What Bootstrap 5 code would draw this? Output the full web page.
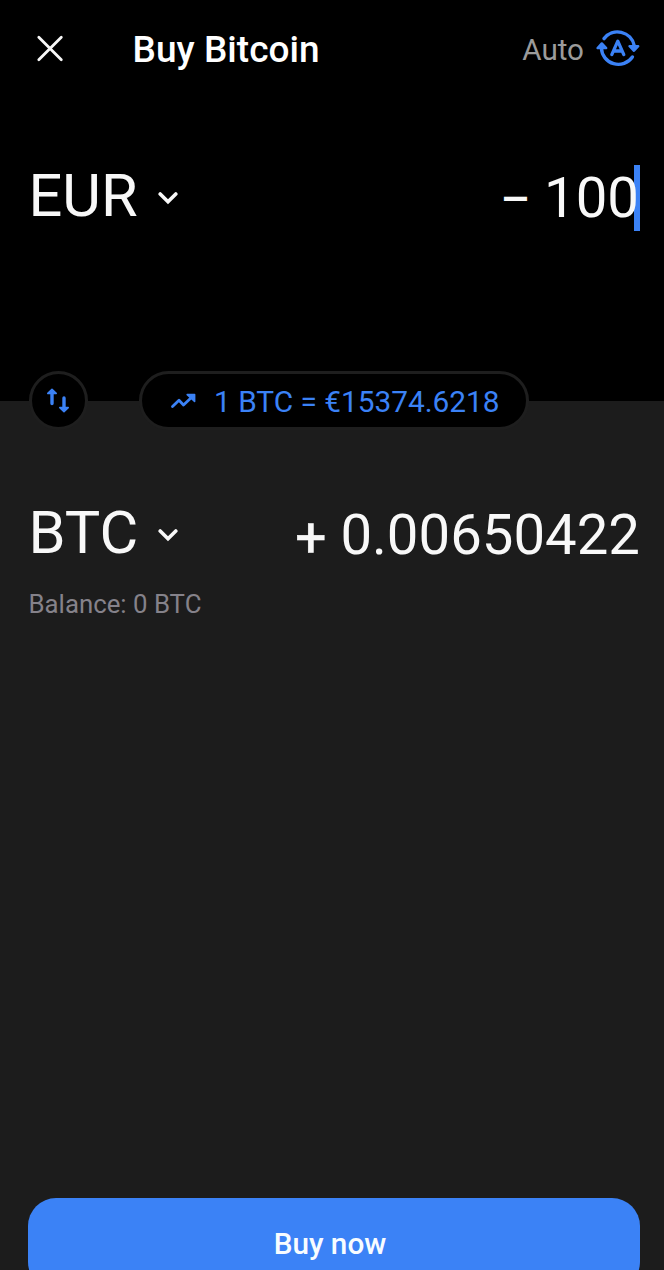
<!DOCTYPE html>
<html lang="en" data-bs-theme="dark">
<head>
<meta charset="utf-8">
<meta name="viewport" content="width=device-width, initial-scale=1">
<title>Buy Bitcoin</title>
<link href="https://cdn.jsdelivr.net/npm/bootstrap@5.3.0/dist/css/bootstrap.min.css" rel="stylesheet">
<style>
  :root { --blue: #3b82f6; --panel: #1c1c1c; }
  body { font-family: Roboto, "Liberation Sans", sans-serif; background: var(--panel); color: #f8f8f8; height: 1270px; }
  svg { display: block; flex: none; }
  .pay { background: #000; height: 401px; padding-top: .1px; }
  .topbar { height: 100px; padding: 0 24px 0 36px; }
  .topbar svg { margin-bottom: 3px; }
  .title { font-size: 37px; font-weight: 500; line-height: 50px; margin-left: 68.5px; letter-spacing: .05px; }
  .auto { font-size: 29.6px; line-height: 40px; color: #9b9b9b; margin-right: 12px; }
  .amount-row { height: 70px; padding: 0 24px 0 28.5px; }
  .pay .amount-row { margin-top: 63px; }
  .receive .amount-row { margin-top: 71px; }
  .code { font-size: 59.5px; line-height: 70px; margin-bottom: 5px; }
  .code + svg { margin-left: 20px; }
  .value { font-size: 56.3px; line-height: 70px; }
  .minus { font-size: 46px; font-weight: 500; line-height: 1; vertical-align: 2px; }
  .plus { font-size: 55px; line-height: 1; vertical-align: -3px; -webkit-text-stroke: .6px; }
  .caret { width: 6px; height: 66px; background: var(--blue); margin-left: -5px; }
  .value { z-index: 1; }
  .rate-row { height: 58px; margin-top: -30px; padding-left: 29px; gap: 51px; color: var(--blue); }
  .swap, .rate { background: #000; border: 3px solid #1e1e1e; height: 59px; }
  .swap { width: 59px; padding-right: 2px; }
  .rate { width: 390px; font-size: 29.8px; padding-left: 28px; gap: 17px; }
  .rate span { padding-top: 3px; }
  .balance { font-size: 25.8px; line-height: 36px; color: #85828a; padding-left: 28.5px; margin-top: 16px; }
  .buy { height: 92px; margin: 0 24px -20px 28px; border-radius: 28px; background: var(--blue); font-size: 29.7px; font-weight: 500; color: #f8fcff; padding: 0 8px 0 0; border: 0; }
</style>
</head>
<body class="overflow-hidden d-flex flex-column">
<section class="pay flex-shrink-0">
  <header class="topbar d-flex align-items-center">
    <svg width="28" height="28" viewBox="0 0 28 28" fill="none" stroke="#f8f8f8" stroke-width="2.8" stroke-linecap="round"><path d="M2.8 2.3 25.3 24.8M25.3 2.3 2.8 24.8"/></svg>
    <h1 class="title mb-0">Buy Bitcoin</h1>
    <span class="auto ms-auto">Auto</span>
    <svg width="44" height="40" viewBox="0 0 44 40" fill="none" stroke="#3b82f6" stroke-width="3.4" stroke-linecap="round" stroke-linejoin="round"><path d="M8 9.6A17 17 0 0 1 38.2 16.5M36.4 28A17 17 0 0 1 5.4 19"/><path d="M33.6 17.2h8.6L38 21.8ZM1.6 19h8.6L5.8 14.4Z" fill="#3b82f6" stroke-width="2.4"/><path d="M15.8 25.6 21.8 12.2 27.8 25.6M18 22h7.6" stroke-width="3.3"/></svg>
  </header>
  <div class="amount-row d-flex align-items-center">
    <span class="code">EUR</span>
    <svg width="20" height="14" viewBox="0 0 20 14" fill="none" stroke="#f8f8f8" stroke-width="3.6" stroke-linecap="round"><path d="M2.2 3 10 10.8 17.8 3"/></svg>
    <span class="value position-relative ms-auto"><span class="minus">–</span> 100</span>
    <span class="caret"></span>
  </div>
</section>
<div class="rate-row d-flex flex-shrink-0">
  <div class="swap rounded-circle d-flex align-items-center justify-content-center">
    <svg width="24" height="26" viewBox="0 0 24 26" fill="none" stroke="#3b82f6" stroke-width="3.4" stroke-linecap="round" stroke-linejoin="round"><path d="M6 5V15.5M18 10V20"/><path d="M1.8 5.4h8.4L6 1.4ZM13.8 19.6h8.4L18 23.6Z" fill="#3b82f6" stroke-width="1.6"/></svg>
  </div>
  <div class="rate rounded-pill d-flex align-items-center">
    <svg width="27" height="18" viewBox="0 0 27 18" fill="none" stroke="#3b82f6" stroke-width="2.8" stroke-linecap="round" stroke-linejoin="round"><path d="M2.5 14.5 9 8.3 13.5 13 23 4"/><path d="M17.2 2.6h7.4V9.4Z" fill="#3b82f6" stroke-width="1.6"/></svg>
    <span>1 BTC = €15374.6218</span>
  </div>
</div>
<section class="receive">
  <div class="amount-row d-flex align-items-center">
    <span class="code">BTC</span>
    <svg width="20" height="14" viewBox="0 0 20 14" fill="none" stroke="#f8f8f8" stroke-width="3.6" stroke-linecap="round"><path d="M2.2 3 10 10.8 17.8 3"/></svg>
    <span class="value ms-auto"><span class="plus">+</span> 0.00650422</span>
  </div>
  <div class="balance">Balance: 0 BTC</div>
</section>
<button class="buy btn mt-auto flex-shrink-0">Buy now</button>
<script src="https://cdn.jsdelivr.net/npm/bootstrap@5.3.0/dist/js/bootstrap.bundle.min.js"></script>
</body>
</html>
